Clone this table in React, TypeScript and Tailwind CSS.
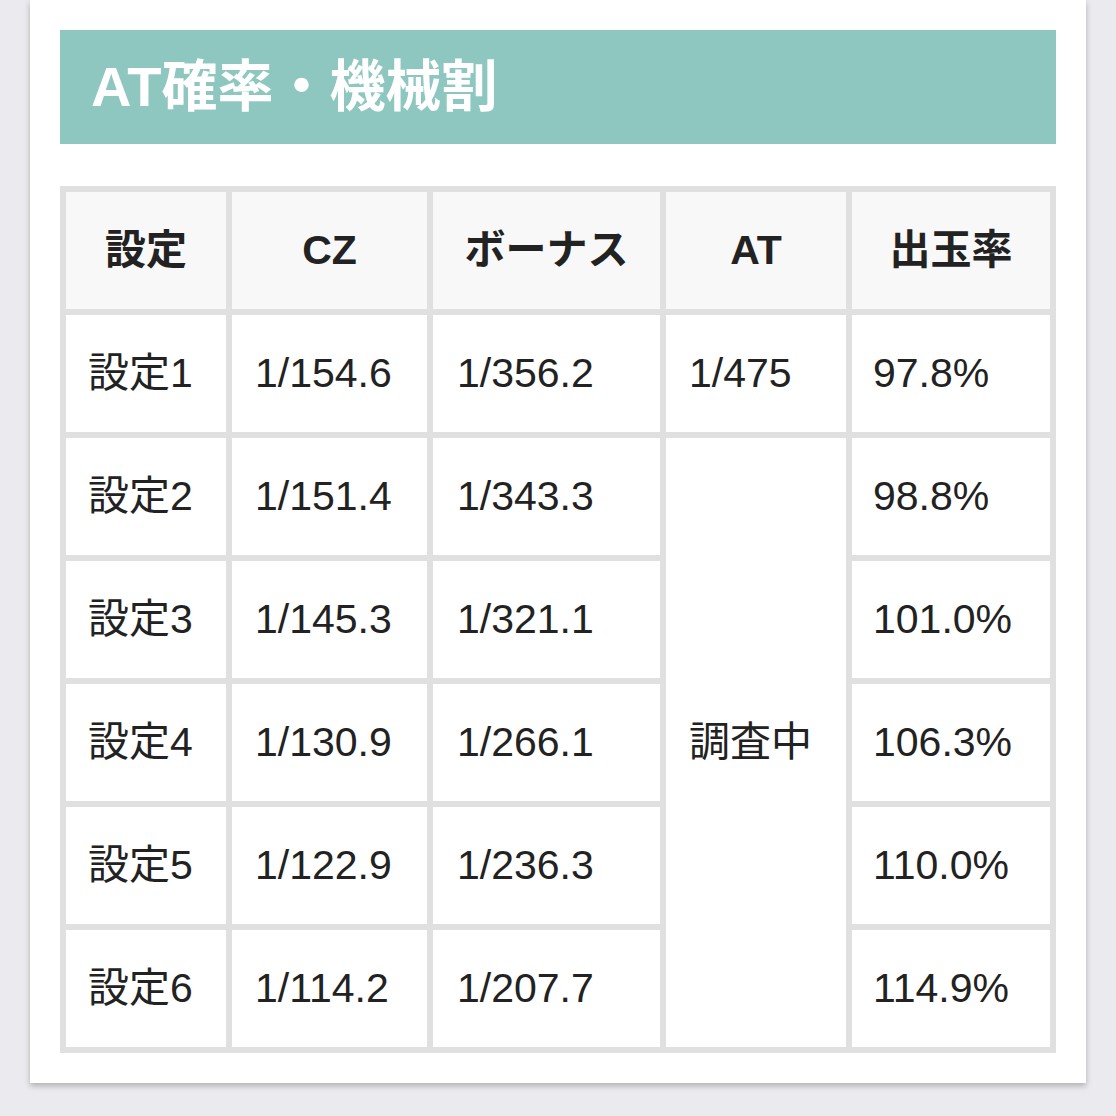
import React from "react";

const rows = [
  ["設定1", "1/154.6", "1/356.2", "97.8%"],
  ["設定2", "1/151.4", "1/343.3", "98.8%"],
  ["設定3", "1/145.3", "1/321.1", "101.0%"],
  ["設定4", "1/130.9", "1/266.1", "106.3%"],
  ["設定5", "1/122.9", "1/236.3", "110.0%"],
  ["設定6", "1/114.2", "1/207.7", "114.9%"],
];

const font = { fontFamily: '"Liberation Sans", "Noto Sans CJK JP", sans-serif' };

export default function App() {
  const head = ["設定", "CZ", "ボーナス", "AT", "出玉率"];
  return (
    <div className="w-[1116px] h-[1116px] bg-[#ebebef] overflow-hidden" style={font}>
      <div className="ml-[30px] w-[1056px] bg-white p-[30px] shadow-[0_3px_6px_rgba(0,0,0,0.25)]">
        <div className="h-[114px] bg-[#8dc7bf] flex items-center pl-[31px]">
          <span className="text-white font-bold text-[56px] leading-none">AT確率・機械割</span>
        </div>
        <div className="mt-[42px] grid grid-cols-[160px_195px_227px_180px_198px] grid-rows-[repeat(7,117px)] gap-[6px] p-[6px] bg-[#e0e0e0] text-[#222]">
          {head.map((h) => (
            <div key={h} className="bg-[#f8f8f8] flex items-center justify-center font-bold text-[41px]">
              {h}
            </div>
          ))}
          {rows.map((r, i) => (
            <React.Fragment key={r[0]}>
              <div className="bg-white flex items-center pl-[22px] text-[41px]">{r[0]}</div>
              <div className="bg-white flex items-center pl-[23px] text-[41px]">{r[1]}</div>
              <div className="bg-white flex items-center pl-[24px] text-[41px]">{r[2]}</div>
              {i === 0 && (
                <div className="bg-white flex items-center pl-[23px] text-[41px]">1/475</div>
              )}
              {i === 1 && (
                <div className="bg-white row-span-5 flex items-center pl-[23px] text-[41px]">調査中</div>
              )}
              <div className="bg-white flex items-center pl-[21px] text-[41px]">{r[3]}</div>
            </React.Fragment>
          ))}
        </div>
      </div>
    </div>
  );
}
